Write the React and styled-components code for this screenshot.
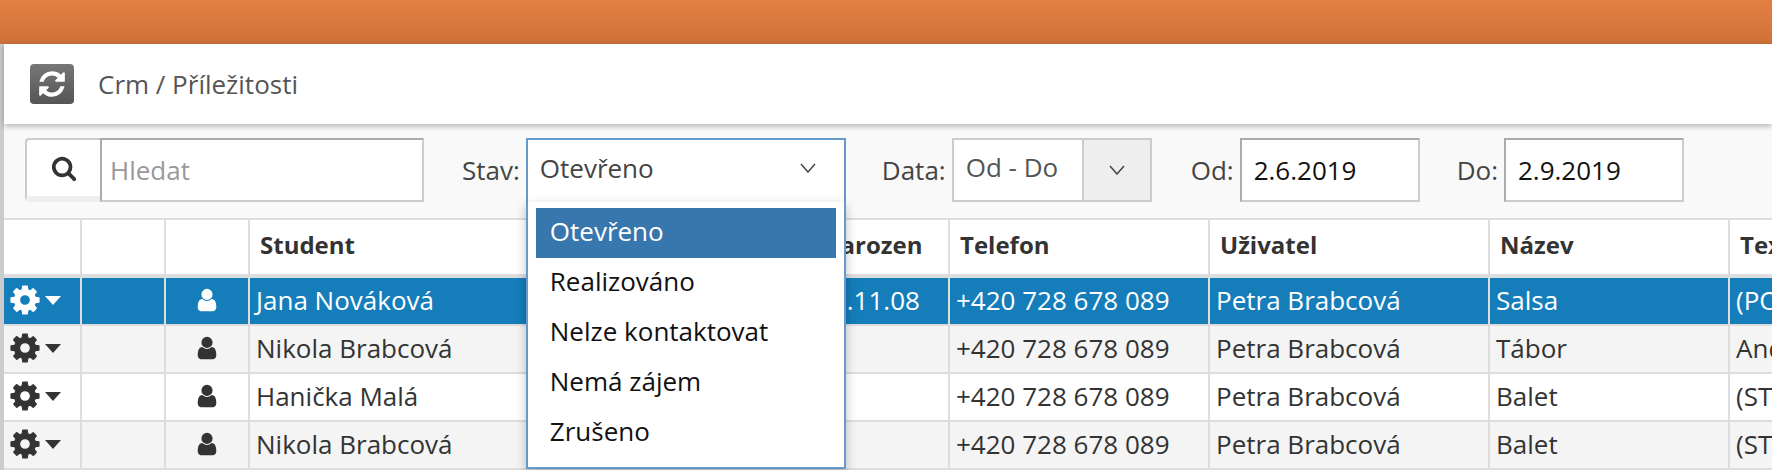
import styled, { createGlobalStyle } from "styled-components";

const GlobalStyle = createGlobalStyle`
  html, body { margin: 0; padding: 0; height: 100%; overflow: hidden; }
  body { font-family: "Open Sans", "Noto Sans", sans-serif; color: #333; background: #fff; }
`;

const ICONS = {
  cog: "M1152 896q0-106-75-181t-181-75-181 75-75 181 75 181 181 75 181-75 75-181zm512-109v222q0 12-8 23t-20 13l-185 28q-19 54-39 91 35 50 107 138 10 12 10 25t-9 23q-27 37-99 108t-94 71q-12 0-26-9l-138-108q-44 23-91 38-16 136-29 186-7 28-36 28h-222q-14 0-24.5-8.5t-11.5-21.5l-28-184q-49-16-90-37l-141 107q-10 9-25 9-14 0-25-11-126-114-165-168-7-10-7-23 0-12 8-23 15-21 51-66.500t54-70.500q-27-50-41-99l-183-27q-13-2-21-12.500t-8-23.500v-222q0-12 8-23t19-13l186-28q14-46 39-92-40-57-107-138-10-12-10-24 0-10 9-23 26-36 98.500-107.500t94.500-71.500q13 0 26 10l138 107q44-23 91-38 16-136 29-186 7-28 36-28h222q14 0 24.500 8.500t11.500 21.500l28 184q49 16 90 37l142-107q9-9 24-9 13 0 25 10 129 119 165 170 7 8 7 22 0 12-8 23-15 21-51 66.500t-54 70.500q26 50 41 98l183 28q13 2 21 12.500t8 23.500z",
  user: "M1536 1399q0 109-62.500 187t-150.500 78h-854q-88 0-150.500-78t-62.500-187q0-85 8.500-160.500t31.500-152 58.500-131 94-89 134.500-34.500q131 128 313 128t313-128q76 0 134.500 34.500t94 89 58.500 131 31.500 152 8.500 160.500zm-256-887q0 159-112.500 271.500t-271.500 112.500-271.500-112.500-112.500-271.500 112.500-271.500 271.500-112.500 271.500 112.500 112.500 271.500z",
  refresh: "M1639 1056q0 5-1 7-64 268-268 434.500t-478 166.500q-146 0-282.500-55t-243.500-157l-129 129q-19 19-45 19t-45-19-19-45v-448q0-26 19-45t45-19h448q26 0 45 19t19 45-19 45l-137 137q71 66 161 102t187 36q134 0 250-65t186-179q11-17 53-117 8-23 30-23h192q13 0 22.500 9.500t9.500 22.500zm25-800v448q0 26-19 45t-45 19h-448q-26 0-45-19t-19-45 19-45l138-138q-148-137-349-137-134 0-250 65t-186 179q-11 17-53 117-8 23-30 23h-199q-13 0-22.500-9.500t-9.500-22.500v-7q65-268 270-434.500t480-166.500q146 0 284 55.500t245 156.500l130-129q19-19 45-19t45 19 19 45z",
  search: "M1216 832q0-185-131.500-316.500t-316.500-131.500-316.500 131.500-131.500 316.500 131.500 316.500 316.500 131.500 316.500-131.500 131.500-316.500zm512 832q0 52-38 90t-90 38q-54 0-90-38l-343-342q-179 124-399 124-143 0-273.500-55.500t-225-150-150-225-55.500-273.500 55.500-273.500 150-225 225-150 273.500-55.500 273.500 55.500 225 150 150 225 55.500 273.500q0 220-124 399l343 343q37 37 37 90z",
};

function Icon({ name, size }) {
  return (
    <svg width={size} height={size} viewBox="0 0 1792 1792" fill="currentColor">
      <path d={ICONS[name]} />
    </svg>
  );
}

function Chevron() {
  return (
    <svg width="16" height="10" viewBox="0 0 16 10" fill="none" stroke="#444" strokeWidth="1.5">
      <path d="M1 1l7 8 7-8" />
    </svg>
  );
}

const COLUMNS = [78, 84, 84, 561, 139, 260, 280, 240, 300];
const HEADERS = ["", "", "", "Student", "Narozen", "Telefon", "Uživatel", "Název", "Text"];
const ROWS = [
  { student: "Jana Nováková", born: "08.11.08", nazev: "Salsa", text: "(PO) Salsa", active: true },
  { student: "Nikola Brabcová", born: "", nazev: "Tábor", text: "Andrea" },
  { student: "Hanička Malá", born: "", nazev: "Balet", text: "(ST) Balet" },
  { student: "Nikola Brabcová", born: "", nazev: "Balet", text: "(ST) Balet" },
];
const STATES = ["Otevřeno", "Realizováno", "Nelze kontaktovat", "Nemá zájem", "Zrušeno"];

export default function App() {
  return (
    <Screen>
      <GlobalStyle />
      <TopBar />
      <Page>
        <TitleBar>
          <RefreshButton>
            <Icon name="refresh" size={30} />
          </RefreshButton>
          <Breadcrumb>Crm / Příležitosti</Breadcrumb>
        </TitleBar>
        <Toolbar>
          <SearchButton>
            <Icon name="search" size={26} />
          </SearchButton>
          <SearchInput>Hledat</SearchInput>
          <Label $offset={38}>Stav:</Label>
          <SelectWrap>
            <SelectBox>
              Otevřeno
              <Chevron />
            </SelectBox>
            <SelectList>
              {STATES.map((state, i) => (
                <SelectItem key={state} $selected={i === 0}>
                  {state}
                </SelectItem>
              ))}
            </SelectList>
          </SelectWrap>
          <Label $offset={36}>Data:</Label>
          <RangeBox>
            <RangeValue>Od - Do</RangeValue>
            <RangeArrow>
              <Chevron />
            </RangeArrow>
          </RangeBox>
          <Label $offset={39}>Od:</Label>
          <DateInput>2.6.2019</DateInput>
          <Label $offset={37}>Do:</Label>
          <DateInput>2.9.2019</DateInput>
        </Toolbar>
        <Grid>
          <colgroup>
            {COLUMNS.map((width, i) => (
              <col key={i} width={width} />
            ))}
          </colgroup>
          <thead>
            <tr>
              {HEADERS.map((title, i) => (
                <HeadCell key={i}>{title}</HeadCell>
              ))}
            </tr>
          </thead>
          <tbody>
            {ROWS.map((row, i) => (
              <Row key={i} $active={row.active} $odd={i % 2 === 1}>
                <Cell>
                  <ActionIcons>
                    <Icon name="cog" size={34} />
                    <Caret />
                  </ActionIcons>
                </Cell>
                <Cell />
                <Cell>
                  <UserIcon>
                    <Icon name="user" size={26} />
                  </UserIcon>
                </Cell>
                <Cell>{row.student}</Cell>
                <Cell>{row.born}</Cell>
                <Cell>+420 728 678 089</Cell>
                <Cell>Petra Brabcová</Cell>
                <Cell>{row.nazev}</Cell>
                <Cell>{row.text}</Cell>
              </Row>
            ))}
          </tbody>
        </Grid>
      </Page>
    </Screen>
  );
}

const Screen = styled.div`
  width: 1772px;
  height: 470px;
  display: flex;
  flex-direction: column;
  overflow: hidden;
`;
const TopBar = styled.div`
  height: 44px;
  flex: none;
  background: linear-gradient(#e37f43, #cf7139);
`;
const Page = styled.div`
  flex: 1;
  min-height: 0;
  border-left: 4px solid #ccc;
  display: flex;
  flex-direction: column;
  background: #f9f9f9;
`;
const TitleBar = styled.div`
  height: 80px;
  flex: none;
  display: flex;
  align-items: center;
  padding-left: 26px;
  background: #fff;
  box-shadow: 0 2px 6px rgba(0, 0, 0, 0.3);
  position: relative;
  z-index: 1;
`;
const RefreshButton = styled.div`
  width: 44px;
  height: 40px;
  border-radius: 4px;
  display: flex;
  align-items: center;
  justify-content: center;
  color: #fff;
  background: linear-gradient(#777, #555);
`;
const Breadcrumb = styled.div`
  margin-left: 24px;
  font-size: 26px;
  color: #555;
`;
const Toolbar = styled.div`
  height: 94px;
  flex: none;
  box-sizing: border-box;
  padding: 14px 0 0 21px;
  display: flex;
  align-items: flex-start;
  font-size: 26px;
`;
const SearchButton = styled.div`
  width: 75px;
  height: 64px;
  box-sizing: border-box;
  border: 2px solid #ccc;
  border-right: none;
  border-radius: 4px 0 0 4px;
  border-bottom: 6px solid #eee;
  display: flex;
  align-items: center;
  justify-content: center;
  color: #333;
  background: #fff;
`;
const SearchInput = styled.div`
  width: 324px;
  height: 64px;
  box-sizing: border-box;
  border: 2px solid #ccc;
  border-top-color: #aaa;
  border-left-color: #aaa;
  padding-left: 8px;
  display: flex;
  align-items: center;
  color: #999;
  background: #fff;
`;
const Label = styled.div`
  height: 64px;
  margin-left: ${(p) => p.$offset}px;
  margin-right: 6px;
  display: flex;
  align-items: center;
  color: #444;
`;
const SelectWrap = styled.div`
  position: relative;
  width: 320px;
  height: 64px;
  z-index: 2;
`;
const SelectBox = styled.div`
  height: 64px;
  box-sizing: border-box;
  border: 2px solid #6699cc;
  border-bottom: none;
  padding: 0 28px 6px 12px;
  display: flex;
  align-items: center;
  justify-content: space-between;
  color: #444;
  background: #fff;
`;
const SelectList = styled.div`
  position: absolute;
  top: 64px;
  left: 0;
  right: 0;
  height: 267px;
  box-sizing: border-box;
  border: 2px solid #6699cc;
  border-top: none;
  padding: 6px 8px 0;
  background: #fff;
  box-shadow: 0 4px 10px rgba(0, 0, 0, 0.25);
`;
const SelectItem = styled.div`
  height: 50px;
  box-sizing: border-box;
  padding: 0 0 4px 14px;
  display: flex;
  align-items: center;
  color: ${(p) => (p.$selected ? "#fff" : "#111")};
  background: ${(p) => (p.$selected ? "#3877ae" : "transparent")};
`;
const RangeBox = styled.div`
  width: 200px;
  height: 64px;
  box-sizing: border-box;
  border: 2px solid #ccc;
  display: flex;
  background: #fff;
`;
const RangeValue = styled.div`
  flex: 1;
  padding: 0 0 6px 12px;
  display: flex;
  align-items: center;
  color: #555;
`;
const RangeArrow = styled.div`
  width: 66px;
  border-left: 2px solid #ccc;
  display: flex;
  align-items: center;
  justify-content: center;
  background: #eee;
`;
const DateInput = styled.div`
  width: 180px;
  height: 64px;
  box-sizing: border-box;
  border: 2px solid #ccc;
  border-top-color: #aaa;
  border-left-color: #aaa;
  padding-left: 12px;
  display: flex;
  align-items: center;
  color: #111;
  background: #fff;
`;
const Grid = styled.table`
  table-layout: fixed;
  width: 1926px;
  flex: none;
  border-collapse: separate;
  border-spacing: 0;
  border-top: 2px solid #ddd;
  font-size: 26px;
`;
const HeadCell = styled.th`
  height: 58px;
  padding: 0 0 5px 10px;
  box-sizing: border-box;
  text-align: left;
  font-size: 24px;
  font-weight: 700;
  color: #333;
  background: #fff;
  border-right: 2px solid #ddd;
  border-bottom: 4px solid #ddd;
`;
const Row = styled.tr`
  color: ${(p) => (p.$active ? "#fff" : "#333")};
  background: ${(p) => (p.$active ? "#147dba" : p.$odd ? "#f4f4f4" : "#fff")};
`;
const Cell = styled.td`
  height: 48px;
  padding: 0 0 2px 6px;
  box-sizing: border-box;
  white-space: nowrap;
  overflow: hidden;
  border-right: 2px solid #ddd;
  border-bottom: 2px solid #ddd;
`;
const ActionIcons = styled.div`
  display: flex;
  align-items: center;
  gap: 3px;
  margin-left: -2px;
`;
const Caret = styled.span`
  width: 0;
  height: 0;
  border-left: 8px solid transparent;
  border-right: 8px solid transparent;
  border-top: 9px solid currentColor;
`;
const UserIcon = styled.div`
  display: flex;
  justify-content: center;
  padding-right: 6px;
`;
